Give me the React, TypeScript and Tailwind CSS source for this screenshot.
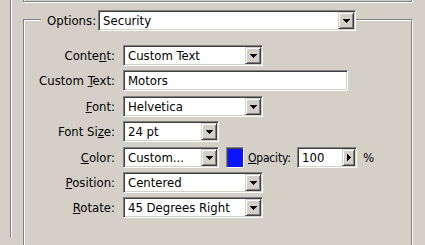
import React from "react";

function DownTri() {
  return (
    <svg width="7" height="4" viewBox="0 0 7 4" shapeRendering="crispEdges">
      <rect x="0" y="0" width="7" height="1" fill="#000" />
      <rect x="1" y="1" width="5" height="1" fill="#000" />
      <rect x="2" y="2" width="3" height="1" fill="#000" />
      <rect x="3" y="3" width="1" height="1" fill="#000" />
    </svg>
  );
}

function RightTri() {
  return (
    <svg width="4" height="7" viewBox="0 0 4 7" shapeRendering="crispEdges">
      <rect x="0" y="0" width="1" height="7" fill="#000" />
      <rect x="1" y="1" width="1" height="5" fill="#000" />
      <rect x="2" y="2" width="1" height="3" fill="#000" />
      <rect x="3" y="3" width="1" height="1" fill="#000" />
    </svg>
  );
}

function Btn({ narrow, right }: { narrow?: boolean; right?: boolean }) {
  return (
    <div
      className={
        (narrow ? "w-[13px] " : "w-[16px] ") +
        "h-full shrink-0 bg-[#d4d0c8] border border-t-[#d4d0c8] border-l-[#d4d0c8] border-r-[#404040] border-b-[#404040] shadow-[inset_1px_1px_0_#fff,inset_-1px_-1px_0_#808080] flex items-center justify-center"
      }
    >
      {right ? <RightTri /> : <DownTri />}
    </div>
  );
}

function Field({
  w,
  value,
  btn = true,
  narrow,
  right,
}: {
  w: string;
  value: string;
  btn?: boolean;
  narrow?: boolean;
  right?: boolean;
}) {
  return (
    <div
      className={
        w +
        " h-[21px] shrink-0 flex bg-white border border-t-[#808080] border-l-[#808080] border-r-white border-b-white shadow-[inset_1px_1px_0_#404040,inset_-1px_-1px_0_#d4d0c8] p-[1px]"
      }
    >
      <div className="flex-1 pl-[3px] flex items-center text-[13px] leading-none whitespace-nowrap overflow-hidden text-black">
        {value}
      </div>
      {btn && <Btn narrow={narrow} right={right} />}
    </div>
  );
}

function Label({ children }: { children: React.ReactNode }) {
  return (
    <div className="w-[91px] mr-[8px] shrink-0 text-right text-[13px] leading-none text-black whitespace-nowrap">
      {children}
    </div>
  );
}

export default function App() {
  return (
    <div className="w-[425px] h-[245px] overflow-hidden bg-[#d4d0c8] pl-[10px] font-['DejaVu_Sans_Condensed','Liberation_Sans',sans-serif]">
      <div className="h-full border-l border-[#808080] shadow-[inset_1px_0_0_#fff] pl-[12px]">
        {/* previous group box bottom */}
        <div className="w-[389px] h-[10px] -mt-[8px] border border-[#808080] shadow-[inset_1px_1px_0_#fff,1px_1px_0_#fff]" />
        {/* Options group box */}
        <div className="relative w-[389px] h-[300px] mt-[17px] border border-[#808080] shadow-[inset_1px_1px_0_#fff,1px_1px_0_#fff]">
          <div className="absolute top-[-10px] left-[17px] h-[21px] flex items-center bg-[#d4d0c8] pl-[6px]">
            <span className="text-[13px] leading-none text-black mr-[2px]">Options:</span>
            <Field w="w-[258px]" value="Security" />
          </div>

          <div className="flex flex-col pt-[25px]">
            <div className="flex items-center">
              <Label>
                Conte<u>n</u>t:
              </Label>
              <Field w="w-[140px]" value="Custom Text" />
            </div>
            <div className="flex items-center mt-[4px]">
              <Label>
                Custom <u>T</u>ext:
              </Label>
              <Field w="w-[225px]" value="Motors" btn={false} />
            </div>
            <div className="flex items-center mt-[5px]">
              <Label>
                <u>F</u>ont:
              </Label>
              <Field w="w-[140px]" value="Helvetica" />
            </div>
            <div className="flex items-center mt-[4px]">
              <Label>
                Font Si<u>z</u>e:
              </Label>
              <Field w="w-[96px]" value="24 pt" />
            </div>
            <div className="flex items-center mt-[5px]">
              <Label>
                <u>C</u>olor:
              </Label>
              <Field w="w-[96px]" value="Custom..." />
              <div className="ml-[7px] w-[18px] h-[21px] shrink-0 bg-[#0a14ff] border border-t-[#808080] border-l-[#808080] border-r-white border-b-white shadow-[inset_1px_1px_0_#404040]" />
              <span className="ml-[4px] w-[49px] shrink-0 text-[12px] leading-none tracking-[-0.2px] text-black whitespace-nowrap">
                <u>O</u>pacity:
              </span>
              <Field w="w-[60px]" value="100" narrow right />
              <span className="ml-[6px] text-[13px] leading-none text-black">%</span>
            </div>
            <div className="flex items-center mt-[4px]">
              <Label>
                <u>P</u>osition:
              </Label>
              <Field w="w-[140px]" value="Centered" />
            </div>
            <div className="flex items-center mt-[4px]">
              <Label>
                <u>R</u>otate:
              </Label>
              <Field w="w-[140px]" value="45 Degrees Right" />
            </div>
          </div>
        </div>
      </div>
    </div>
  );
}
